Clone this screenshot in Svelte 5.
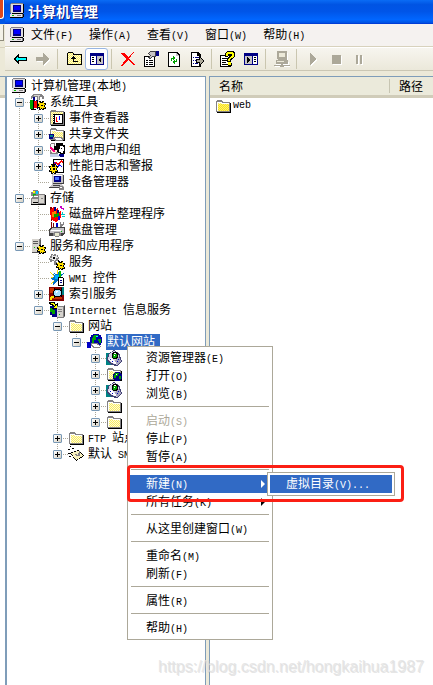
<script lang="ts">
	type Shape = [d: string, fill: string];

	interface TreeNode {
		label: string;
		icon: string;
		depth: number;
		box?: '+' | '-';
		selected?: boolean;
	}

	interface MenuEntry {
		label?: string;
		disabled?: boolean;
		active?: boolean;
		sub?: boolean;
	}

	const folder: Shape[] = [
		['M1 3h1v-1h5v1h1v1h7v10H1z', '#848284'],
		['M2 4h5v1h7v8H2z', 'url(#dither)'],
		['M2 4h1v9H2zM2 4h5v1H2zM7 5h7v1H7z', '#fff'],
		['M15 5h1v10H2v-1h13z', '#000']
	];
	const computer: Shape[] = [
		['M2 0h12v11H2z', '#dedbde'],
		['M2 0h12v1H2zM1 1h1v9H1z', '#848284'],
		['M14 1h1v9h-1zM3 10h11v1H3z', '#000'],
		['M4 2h8v7H4z', '#000084'],
		['M5 3h6v4H5z', '#0000ff'],
		['M1 11h13l1-1v3l-2 2H1z', '#848284'],
		['M1 11h12v3H1z', '#e7e3e7'],
		['M3 12h2v1H3z', '#00c300'],
		['M8 12h4v1H8z', '#848284'],
		['M1 14h13v1H1zM14 11h1v3h-1z', '#000']
	];
	const gear: Shape[] = [
		['M9 7h2v1h1V7h2v2h2v2h-1v2h1v2h-2v1h-2v-1h-1v1H9v-2H7v-2h1v-1H7V9h2z', '#000'],
		['M9 8h1v1h3V8h1v2h1v1h-1v2h1v1h-2v1h-1v-1h-1v1h-1v-2H8v-1h1v-2H8V9h1z', '#ffdf00'],
		['M11 11h2v1h-2z', '#000']
	];
	const globe: Shape[] = [
		['M9 6h5v1h1v1h1v5h-1v1h-1v1H9v-1H8v-1H7V8h1V7h1z', '#000084'],
		['M9 7h4v1h-1v2h-2v2H8V9h1zM13 10h2v3h-2z', '#00a200'],
		['M10 8h1v1h-1z', '#fff']
	];
	const server: Shape[] = [
		['M2 1h7l2 -1v14l-2 1H2z', '#848284'],
		['M2 1h7v14H2z', '#d6d3ce'],
		['M3 3h5v1H3zM3 5h5v1H3zM2 14h8v1H2zM10 2h1v12h-1z', '#5a595a'],
		['M4 9h1v1H4z', '#00c300']
	];
	const disk: Shape[] = [
		['M1 8l3-3h11v8l-2 2H1z', '#848284'],
		['M2 9h10v5H2z', '#d6d3ce'],
		['M4 6h9v1H4z', '#fff'],
		['M3 12h5v1H3zM1 14h13v1H1zM14 6h1v8h-1z', '#000'],
		['M9 10h2v1H9z', '#00c300']
	];
	const app: Shape[] = [
		['M0 3h4v9H0zM0 11h6v4H0z', '#008284'],
		['M2 4l6-4 5 3 3 8-5 5-6-1-4-4z', '#424173'],
		['M3 4l5-3 4 3 3 7-4 4-5-2-4-3z', '#d6d3e7'],
		['M2 9l3-1 5 4v2l-4-1z', '#fff'],
		['M9 10l4-3 2 4-4 4-1-2z', '#a5a2bd'],
		['M7 2h4v1h1v5h-1v1H7V8H6V3h1z', '#000'],
		['M7 4h4v3h-1v1H7z', '#00a200'],
		['M8 3h2v1H8zM8 5h1v1H8z', '#fff'],
		['M11 11h1v1h-1zM12 9h1v1h-1zM4 9h1v1H4zM6 11h1v1H6z', '#0000c6']
	];

	const icons: Record<string, Shape[]> = {
		folder,
		computer,
		filefolder: [
			...folder,
			['M3 6h11v7H3z', 'url(#gold)']
		],
		systools: [
			['M1 2l3-2h7l3 2v3h-2V3h-2v3H7V3H4L1 5z', '#848284'],
			['M4 1h6v1H4zM8 2h1v6H8z', '#d6d3ce'],
			['M3 3h2v4H3zM6 6h1v4H6z', '#000084'],
			['M0 6h3v9H0z', '#00a200'],
			['M4 7h3v7H4z', '#ff0000'],
			['M3 6h1v10H3zM7 6h1v9H7zM1 15h5v1H1z', '#000'],
			...gear
		],
		events: [
			['M1 1h1v-1h5v1h8v14H1z', '#848284'],
			['M2 2h12v12H2z', 'url(#dither)'],
			['M15 2h1v14H2v-1h13z', '#000'],
			['M4 4h10v10H4z', '#000'],
			['M6 5h7v8H6z', '#fff'],
			['M4 5h1v1H4zM4 7h1v1H4zM4 9h1v1H4zM4 11h1v1H4z', '#fff'],
			['M7 7h1v5H7z', '#ff0000'],
			['M10 6h1v4h-1z', '#0000ff'],
			['M8 11h1v1H8z', '#ff0000']
		],
		shared: [
			...folder,
			['M0 8h5v5H0z', '#000084'],
			['M1 9h3v2H1z', '#008284'],
			['M4 11h8l3 2-2 2H7l-3-2z', '#848284'],
			['M5 12h6l2 1-1 1H8z', '#fff']
		],
		users: [
			['M1 8h8v7H1z', '#848284'],
			['M1 2h1v5H1zM5 1h1v3H5zM2 1h3v1H2z', '#848284'],
			['M2 8l3-2 3 3-1 2H3z', '#ffe7d6'],
			['M0 6l2-1 4 4-1 2z', '#ff0084'],
			['M1 12h8l2 3H1z', '#c6cfe7'],
			['M7 1h7v2h2v9h-4l-4-2V8H5V4h2z', '#000'],
			['M11 4h3v1h1v4h-1v2h-2v-1h-2V7h1z', '#fff'],
			['M12 6h1v1h-1z', '#000'],
			['M10 12h5v3h-4z', '#000084']
		],
		perf: [
			['M4 1h11v14H4z', '#000'],
			['M5 2h9v12H5z', '#fff'],
			['M5 5l2-2 2 3 3-4 2 2v1l-2-1-3 4-2-3-2 2z', '#ff0000'],
			['M5 4h1l2 4 2-2 3 2v1l-3-1-2 2z', '#0000ff'],
			['M2 6h2v1h1V6h2v2h2v2H8v2h1v2H7v2H5v-1H4v1H2v-2H0v-2h1v-2H0V8h2z', '#000'],
			['M2 7h1v2h3V7h1v2h1v1H7v2h1v1H6v2H5v-1H4v1H3v-2H1v-1h1v-2H1V9h1z', '#ffdf00'],
			['M4 10h2v2H4z', '#000']
		],
		devices: [
			['M3 0h11v10H3z', '#c6c3c6'],
			['M4 1h9v1H4z', '#fff'],
			['M5 2h7v6H5z', '#000084'],
			['M6 3h4v3H6z', '#4a71ff'],
			['M14 1h1v9h-1zM4 9h10v1H4z', '#424142'],
			['M2 11l2-1h9l2 3H1z', '#c6c3c6'],
			['M4 11h7v1H4zM0 13h12v1H0z', '#424142'],
			['M10 12h4v1h1v3h-5z', '#848284'],
			['M11 13h2v1h-2z', '#fff']
		],
		storage: [
			['M3 0h5v1h1v6H3V6H1V2h2z', '#848284'],
			['M3 1h2v2H3z', '#ffff00'],
			['M6 1h2v3H6z', '#00c7ff'],
			['M3 4h3v2H3z', '#00c300'],
			...disk,
			['M8 4h7v10H8z', '#848284'],
			['M9 5h5v8H9z', '#d6d3ce'],
			['M11 8h2v1h-2z', '#848284'],
			['M15 5h1v10H8v-1h7z', '#000']
		],
		defrag: [
			['M1 1h2v3H1zM2 8h1v7H2z', '#840000'],
			['M1 4l4-3v4l4-3v5l3-2v7l-5 4-5-3z', '#ff0000'],
			['M5 1h2v4H5zM8 4h2v6H8z', '#000084'],
			['M3 6l4-1v5l-4 1z', '#ff8200'],
			['M5 8l5-1v3l-5 2z', '#00a200'],
			['M9 10h2v4H9z', '#0000ff'],
			['M11 0h2v2h2v2h-1V3h-2z', '#c600c6'],
			['M12 8h4v1h-4zM13 6h1v2h-1zM13 10h3v1h-3z', '#00c7c6']
		],
		diskmgmt: [
			['M2 0h1v6H2zM4 1h1v4H4z', '#840000'],
			['M7 1h2v5H7z', '#0000c6'],
			['M11 0h1v2h2V0h1v3l-2 1v3h-2V3z', '#848284'],
			['M0 7l4-2h12v6l-3 3H0z', '#424142'],
			['M1 8l3-2h11v5H1z', '#c6c3c6'],
			['M2 8h10v1H2z', '#fff'],
			['M5 10h6v1h1v3h-2v1H6v-1H4v-3h1z', '#848284'],
			['M6 11h4v3H6z', '#e7e7ce'],
			['M12 9h1v1h-1z', '#00c300']
		],
		services: [...server, ...gear],
		gears: [
			['M2 0h2v1h1V0h2v1h2v2h1v2H9v2H7v1H5V7H3v1H1V6H0V4h1V2h1z', '#848284'],
			['M3 1h1v1h3V1h1v2h1v1H7v2H6v1H5V6H3V5H1V4h2z', '#e7e7e7'],
			['M4 3h2v2H4zM9 6h1v1H9z', '#000'],
			['M5 8h3v3H5z', '#848284'],
			...gear
		],
		wmi: [
			['M5 2l2 3 3-4v4l5-2-3 4 3 2-4 1v4l-3-3-4 4 1-5-4-1 4-2-3-4 4 2z', '#0071c6'],
			['M1 2l4 3-1 1zM0 8l4-1v1zM2 14l3-4v2zM8 0h1v4H8z', '#ffdf00'],
			['M6 5h4v4H6z', '#00aeff'],
			['M10 1h2v6h-2z', '#00c300'],
			['M9 7h5v1h1v8H9z', '#000'],
			['M10 8h4v7h-4z', '#fff'],
			['M11 10h2v1h-2zM11 12h2v1h-2z', '#000084']
		],
		index: [
			['M0 1h15v14H0z', '#840000'],
			['M1 2h4v5H1zM2 11h11v2H2z', '#c63000'],
			['M5 2h1v10H5zM12 2h1v9h-1z', '#000'],
			['M13 1h2v8h-2z', '#008284'],
			['M6 3h5v1h1v1h1v4h-1v1h-1v1H6v-1H5V9H4V5h1V4h1z', '#000'],
			['M6 4h5v1h1v4h-1v1H6V9H5V5h1z', '#a5dfff'],
			['M7 5h2v1H7zM7 6h1v1H7z', '#fff'],
			['M2 10h3v2H3v2H1v-3h1z', '#ffdf00']
		],
		iis: [
			['M1 4h5v2h2v9H3v-2H1z', '#000084'],
			['M1 6h3v2h2v4H3v-2H1z', '#00a200'],
			['M0 0h6v2h2V1h1v6H3V6h2V4H3V3H1z', '#000'],
			['M2 1h3v1h1v2h1V3h1v3H5V5h1L4 2H2z', '#ffff00'],
			['M8 4h6l2-1v11l-2 2H8z', '#848284'],
			['M8 5h6v10H8z', '#d6d3ce'],
			['M9 7h4v1H9zM9 9h4v1H9zM8 15h7v1H8z', '#848284'],
			['M15 4h1v10h-1z', '#424142'],
			['M10 12h1v1h-1z', '#00c300']
		],
		site: [
			['M6 0h6v1h2v2h1v6h-1v2h-2v1H6v-1H4V9H3V3h1V1h2z', '#0000a5'],
			['M7 1h4v2H9v3H7v3H5V4h1V2h1zM11 5h3v4h-2V7h-1z', '#00a200'],
			['M9 2h2v1H9z', '#00ffff'],
			['M0 8h4v6H0z', '#0000c6'],
			['M4 9h6l4 3-2 2H7l-3-2z', '#848284'],
			['M4 10h5l4 2-1 1H8z', '#fff']
		],
		sitefolder: [...folder, ...globe],
		app,
		smtp: [
			['M2 0h1v1H2zM0 3h2v1H0zM4 2h2v1H4zM0 7h3v1H0zM1 10h2v1H1z', '#000'],
			['M2 7l8-3 6 6-8 5z', '#000'],
			['M3 7l7-2 5 5-7 4z', '#f7efbd'],
			['M5 7l5 2 1-4 1 1v4H9z', '#848284']
		],
		back: [
			['M1 8l6-6v4h8v4H7v4z', '#000'],
			['M3 8l3-3v2h8v2H6v2z', '#00ffff']
		],
		forward: [
			['M15 9l-6 6v-4H2V7h7V3z', '#fff'],
			['M14 8l-6 6v-4H1V6h7V2z', '#aca899']
		],
		up: [
			['M1 2h1V1h5v1h1v1h8v11H1z', '#000'],
			['M2 2h5v2h8v9H2z', 'url(#dither)'],
			['M7 5h1v1h1v1h1v1H8v2h4v1H7V8H5V7h1V6h1z', '#000']
		],
		panel: [
			['M1 2h14v12H1z', '#000084'],
			['M2 5h5v8H2z', '#fff'],
			['M3 6h2v1H3zM3 8h2v1H3zM3 10h2v1H3z', '#000'],
			['M8 5h6v8H8z', '#c6c3c6'],
			['M12 6v6l-3-3z', '#000']
		],
		remove: [['M1 2h3l4 4 5-5h1L9 8l6 6h-2L8 9l-5 6H1l5-7z', '#f00']],
		props: [
			['M1 5h11v11H1z', '#000'],
			['M2 6h9v9H2z', '#fff'],
			['M3 9h2v1H3zM6 9h4v1H6zM3 11h2v1H3zM6 11h4v1H6zM3 13h2v1H3zM6 13h4v1H6z', '#000'],
			['M4 3l4-3h5v6H9L7 8 5 7l2-3z', '#424142'],
			['M5 3l3-2h4v4H9L7 7 6 6l2-2z', '#c6c3c6'],
			['M13 0h3v5h-3z', '#000084']
		],
		refresh: [
			['M2 1h9l3 3v12H2z', '#000'],
			['M3 2h7v3h3v10H3z', '#fff'],
			['M10 2l3 3h-3z', '#c6c3c6'],
			['M7 5l3 2-3 2V8H6v2H5V7h2zM9 13l-3-2 3-2v1h1V8h1v3H9z', '#00a200']
		],
		exportlist: [
			['M2 1h7l3 3v12H2z', '#000'],
			['M3 2h5v3h3v10H3z', '#fff'],
			['M4 6h1v1H4zM6 6h4v1H6zM4 9h1v1H4zM6 9h3v1H6zM4 12h1v1H4zM6 12h3v1H6z', '#000084'],
			['M7 8h3V5l6 5-6 5v-3H7z', '#000'],
			['M8 9h3V7l3 3-3 3v-2H8z', '#aca899']
		],
		help: [
			['M0 4h11v12H0z', '#000'],
			['M1 5h9v10H1z', '#fff'],
			['M2 7h5v1H2zM2 9h5v1H2zM2 11h4v1H2zM2 13h6v1H2z', '#000'],
			['M5 2l2-2h6l2 2v4l-4 3v2H7V7l3-2V4H8v2H5z', '#000'],
			['M6 2l1-1h5l2 2v3l-4 2v2H8V8l4-3V3H8v2H6zM8 11h3v3H8z', '#ffff00'],
			['M11 12h1v3H8v-1h3z', '#000']
		],
		console: [
			['M1 2h14v12H1z', '#000084'],
			['M2 5h7v8H2z', '#c6c3c6'],
			['M10 5h4v8h-4z', '#fff'],
			['M4 6l3 3-3 3zM11 6h2v1h-2zM11 8h2v1h-2zM11 10h2v1h-2z', '#000']
		],
		remote: [
			['M5 2h9v9H5zM2 11h13v4H2zM1 15h15v1H1z', '#fff'],
			['M3 0h10v8H3zM4 8h9v1H4zM2 9h12v4H2zM7 13h2v1H7zM0 14h16v1H0zM6 15h4v1H6z', '#aca899'],
			['M5 2h6v4H5zM3 10h7v1H3z', '#ece9d8']
		],
		play: [
			['M6 3l6 6-6 6z', '#fff'],
			['M5 2l6 6-6 6z', '#aca899']
		],
		stop: [
			['M5 5h9v9H5z', '#fff'],
			['M4 4h9v9H4z', '#aca899']
		],
		pause: [
			['M6 5h2v9H6zM10 5h2v9h-2z', '#fff'],
			['M5 4h2v9H5zM9 4h2v9H9z', '#aca899']
		]
	};

	const menuBar = ['文件(F)', '操作(A)', '查看(V)', '窗口(W)', '帮助(H)'];

	const toolbar = [
		['back', '后退'],
		['forward', '前进'],
		null,
		['up', '向上'],
		['panel', '显示树'],
		null,
		['remove', '删除'],
		['props', '属性'],
		['refresh', '刷新'],
		['exportlist', '导出列表'],
		null,
		['help', '帮助'],
		['console', '操作窗格'],
		null,
		['remote', '连接'],
		null,
		['play', '启动'],
		['stop', '停止'],
		['pause', '暂停']
	];

	const nodes: TreeNode[] = [
		{ label: '计算机管理(本地)', icon: 'computer', depth: 0 },
		{ label: '系统工具', icon: 'systools', depth: 1, box: '-' },
		{ label: '事件查看器', icon: 'events', depth: 2, box: '+' },
		{ label: '共享文件夹', icon: 'shared', depth: 2, box: '+' },
		{ label: '本地用户和组', icon: 'users', depth: 2, box: '+' },
		{ label: '性能日志和警报', icon: 'perf', depth: 2, box: '+' },
		{ label: '设备管理器', icon: 'devices', depth: 2 },
		{ label: '存储', icon: 'storage', depth: 1, box: '-' },
		{ label: '磁盘碎片整理程序', icon: 'defrag', depth: 2 },
		{ label: '磁盘管理', icon: 'diskmgmt', depth: 2 },
		{ label: '服务和应用程序', icon: 'services', depth: 1, box: '-' },
		{ label: '服务', icon: 'gears', depth: 2 },
		{ label: 'WMI 控件', icon: 'wmi', depth: 2 },
		{ label: '索引服务', icon: 'index', depth: 2, box: '+' },
		{ label: 'Internet 信息服务', icon: 'iis', depth: 2, box: '-' },
		{ label: '网站', icon: 'folder', depth: 3, box: '-' },
		{ label: '默认网站', icon: 'site', depth: 4, box: '-', selected: true },
		{ label: '', icon: 'app', depth: 5, box: '+' },
		{ label: '', icon: 'sitefolder', depth: 5, box: '+' },
		{ label: '', icon: 'app', depth: 5, box: '+' },
		{ label: '', icon: 'folder', depth: 5, box: '+' },
		{ label: '', icon: 'folder', depth: 5, box: '+' },
		{ label: 'FTP 站点', icon: 'folder', depth: 3, box: '+' },
		{ label: '默认 SMTP', icon: 'smtp', depth: 3, box: '+' }
	];

	const contextMenu: MenuEntry[] = [
		{ label: '资源管理器(E)' },
		{ label: '打开(O)' },
		{ label: '浏览(B)' },
		{},
		{ label: '启动(S)', disabled: true },
		{ label: '停止(P)' },
		{ label: '暂停(A)' },
		{},
		{ label: '新建(N)', active: true, sub: true },
		{ label: '所有任务(K)', sub: true },
		{},
		{ label: '从这里创建窗口(W)' },
		{},
		{ label: '重命名(M)' },
		{ label: '刷新(F)' },
		{},
		{ label: '属性(R)' },
		{},
		{ label: '帮助(H)' }
	];

	// is there a later sibling at this depth before the branch closes
	function continues(index: number, depth: number): boolean {
		for (let i = index + 1; i < nodes.length; i++) {
			if (nodes[i].depth === depth) return true;
			if (nodes[i].depth < depth) return false;
		}
		return false;
	}

	function guides(index: number): string[] {
		const own = nodes[index].depth;
		return Array.from({ length: own }, (_, i) => {
			const more = continues(index, i + 1);
			if (i + 1 === own) return more ? 'tee' : 'elbow';
			return more ? 'line' : 'blank';
		});
	}

	// split into half-width and full-width runs
	function runs(text: string): string[] {
		return text.match(/[\x20-\x7e]+|[^\x20-\x7e]+/g) ?? [];
	}
</script>

{#snippet icon(name: string)}
	<svg class="icon" viewBox="0 0 16 16" aria-hidden="true">
		{#each icons[name] as [d, fill]}
			<path {d} {fill} />
		{/each}
	</svg>
{/snippet}

{#snippet mixed(text: string)}
	{#each runs(text) as run}<span class:latin={/^[\x20-\x7e]/.test(run)}>{run}</span>{/each}
{/snippet}

<svg class="defs" aria-hidden="true">
	<defs>
		<pattern id="dither" width="2" height="2" patternUnits="userSpaceOnUse">
			<rect width="2" height="2" fill="#fffbd6" />
			<rect width="1" height="1" fill="#f7eb63" />
			<rect x="1" y="1" width="1" height="1" fill="#f7eb63" />
		</pattern>
		<pattern id="gold" width="2" height="2" patternUnits="userSpaceOnUse">
			<rect width="2" height="2" fill="#fff36b" />
			<rect width="1" height="1" fill="#f7df21" />
			<rect x="1" y="1" width="1" height="1" fill="#f7df21" />
		</pattern>
	</defs>
</svg>

<div class="desktop">
	<div class="behind" aria-hidden="true">
		<div class="behind-title"><div class="behind-close"></div></div>
		<div class="behind-menu"><div class="behind-button"></div></div>
		<div class="behind-tools"></div>
		<div class="behind-header"></div>
		<div class="behind-body"></div>
	</div>

	<div class="window">
		<header class="title-bar">
			{@render icon('computer')}
			<h1>计算机管理</h1>
		</header>

		<nav class="menu-bar">
			{@render icon('computer')}
			{#each menuBar as item}
				<button class="menu-bar-item">{@render mixed(item)}</button>
			{/each}
		</nav>

		<div class="toolbar" role="toolbar" aria-label="工具栏">
			{#each toolbar as tool}
				{#if tool}
					<button class="tool" class:pressed={tool[0] === 'panel'} aria-label={tool[1]}>
						{@render icon(tool[0])}
					</button>
				{:else}
					<span class="tool-separator"></span>
				{/if}
			{/each}
		</div>

		<div class="panes">
			<div class="tree" role="tree" aria-label="控制台树">
				{#each nodes as node, i}
					<div class="node" role="treeitem" aria-selected={!!node.selected} tabindex="-1">
						{#each guides(i) as guide, level}
							<span class="guide {guide}">
								{#if node.box && level === node.depth - 1}
									<span class="box" class:plus={node.box === '+'}></span>
								{/if}
							</span>
						{/each}
						{@render icon(node.icon)}
						<span class="node-label" class:selected={node.selected}>{@render mixed(node.label)}</span>
					</div>
				{/each}
			</div>

			<div class="list">
				<table>
					<thead>
						<tr><th class="name-column">名称</th><th>路径</th></tr>
					</thead>
					<tbody>
						<tr>
							<td><span class="file">{@render icon('filefolder')}<span class="latin">web</span></span></td>
							<td></td>
						</tr>
					</tbody>
				</table>
			</div>
		</div>
	</div>

	<div class="menu context" role="menu">
		{#each contextMenu as entry}
			{#if entry.label}
				<button class="menu-item" class:active={entry.active} role="menuitem" disabled={entry.disabled}>
					<span>{@render mixed(entry.label)}</span>
					{#if entry.sub}<span class="arrow"></span>{/if}
				</button>
			{:else}
				<hr />
			{/if}
		{/each}
	</div>

	<div class="menu submenu" role="menu">
		<button class="menu-item active" role="menuitem"><span>{@render mixed('虚拟目录(V)...')}</span></button>
	</div>

	<div class="highlight"></div>
	<div class="watermark">https://blog.csdn.net/hongkaihua1987</div>
</div>

<style>
	:global(body) {
		background: #fff;
	}

	.desktop {
		position: relative;
		display: grid;
		grid-template-columns: 5px 1fr;
		min-height: 100vh;
		overflow: hidden;
		font-family: 'Liberation Sans', 'Noto Sans CJK SC', sans-serif;
		font-size: 12px;
		line-height: 16px;
		color: #000;
	}

	.defs {
		position: absolute;
		width: 0;
		height: 0;
	}

	button {
		margin: 0;
		padding: 0;
		border: 0;
		background: none;
		font: inherit;
		color: inherit;
		white-space: nowrap;
	}

	.icon {
		display: block;
		flex: none;
		width: 16px;
		height: 16px;
		shape-rendering: crispEdges;
	}

	.latin {
		font-family: 'Liberation Mono', monospace;
		font-size: 10px;
		white-space: pre;
	}

	/* sliver of the window behind */
	.behind {
		display: flex;
		flex-direction: column;
		background: #ece9d8;
	}

	.behind-title {
		height: 24px;
		background: #0055e5;
	}

	.behind-close {
		width: 3px;
		height: 18px;
		border: 1px solid #fff;
		border-width: 0 1px 1px 0;
		border-radius: 0 0 3px 0;
		background: #e04a1e;
	}

	.behind-menu {
		height: 22px;
		padding-top: 1px;
		border-bottom: 1px solid #d8d2bd;
	}

	.behind-button {
		width: 3px;
		height: 15px;
		border: 1px solid #8f8b7c;
		border-width: 0 1px 1px 0;
		background: #f4f2e8;
	}

	.behind-tools {
		height: 28px;
	}

	.behind-header {
		height: 18px;
		border-top: 1px solid #7f9db9;
		border-bottom: 3px solid #d0ccb9;
	}

	.behind-body {
		flex: 1;
		background: #fff;
	}

	.window {
		display: flex;
		flex-direction: column;
		min-width: 0;
		background: #ece9d8;
	}

	.title-bar {
		display: flex;
		align-items: center;
		gap: 3px;
		height: 24px;
		padding: 0 4px;
		box-sizing: border-box;
		border-bottom: 1px solid #003dd7;
		background: linear-gradient(#0a6cf5 0%, #0054e3 20%, #0055e8 50%, #0066ff 85%, #0050e0 100%);
	}

	.title-bar .icon {
		margin-bottom: 2px;
	}

	h1 {
		margin: 0;
		font-size: 14px;
		font-weight: 700;
		line-height: 20px;
		color: #fff;
		text-shadow: 1px 1px #0a1883;
	}

	.menu-bar {
		display: flex;
		align-items: center;
		height: 22px;
		padding: 0 4px;
		gap: 16px;
		border-bottom: 1px solid #d8d2bd;
		background: #f5f2f0;
	}

	.menu-bar .icon {
		margin-right: -10px;
	}

	.menu-bar-item {
		padding-top: 2px;
	}

	.toolbar {
		display: flex;
		align-items: center;
		height: 22px;
		padding: 0 3px;
		border-top: 1px solid #fff;
		border-bottom: 1px solid #cbc7b4;
		background: linear-gradient(#f7f5ef, #ebe8da);
	}

	.tool {
		display: flex;
		align-items: center;
		justify-content: center;
		flex: none;
		width: 23px;
		height: 22px;
		box-sizing: border-box;
	}

	.tool.pressed {
		border: 1px solid #98b5e2;
		border-radius: 3px;
		background: #fff;
	}

	.tool-separator {
		flex: none;
		width: 1px;
		height: 20px;
		margin: 0 4px 0 3px;
		background: #cac6b0;
	}

	.panes {
		flex: 1;
		display: grid;
		grid-template-columns: 201px 1fr;
		gap: 3px;
		margin-top: 5px;
	}

	.tree {
		padding: 1px 0 0 4px;
		border: 1px solid #7f9db9;
		border-left-width: 2px;
		border-bottom: 0;
		background: #fff;
		overflow: hidden;
	}

	.node {
		display: flex;
		height: 16px;
		white-space: nowrap;
	}

	.guide {
		position: relative;
		display: flex;
		flex: none;
		align-items: center;
		width: 19px;
	}

	.guide::before,
	.guide::after {
		content: '';
		position: absolute;
	}

	.line::before,
	.tee::before,
	.elbow::before {
		top: 0;
		left: 8px;
		width: 1px;
		height: 16px;
		background: repeating-linear-gradient(#aca899 0 1px, transparent 1px 2px);
	}

	.elbow::before {
		height: 8px;
	}

	.tee::after,
	.elbow::after {
		top: 8px;
		left: 8px;
		width: 11px;
		height: 1px;
		background: repeating-linear-gradient(90deg, #aca899 0 1px, transparent 1px 2px);
	}

	.box {
		position: relative;
		z-index: 1;
		width: 7px;
		height: 7px;
		margin: 1px 0 0 4px;
		border: 1px solid #7898b5;
		border-radius: 1px;
		background:
			linear-gradient(#000, #000) center / 5px 1px no-repeat,
			linear-gradient(135deg, #fff, #d5d0c3);
	}

	.box.plus {
		background:
			linear-gradient(#000, #000) center / 5px 1px no-repeat,
			linear-gradient(#000, #000) center / 1px 5px no-repeat,
			linear-gradient(135deg, #fff, #d5d0c3);
	}

	.node-label {
		margin-left: 3px;
		padding: 0 5px 0 1px;
	}

	.node-label.selected {
		background: #316ac5;
		color: #fff;
	}

	.list {
		border: 1px solid #7f9db9;
		border-width: 1px 0 0 1px;
		background: #fff;
		overflow: hidden;
	}

	table {
		width: 100%;
		border-spacing: 0;
		table-layout: fixed;
	}

	th {
		height: 16px;
		padding: 2px 9px 0;
		border-bottom: 3px solid #d0ccb9;
		background: #ebeadb;
		font-weight: 400;
		text-align: left;
	}

	.name-column {
		width: 162px;
		background: linear-gradient(#c7c5b2, #c7c5b2) right center / 1px 14px no-repeat #ebeadb;
	}

	td {
		padding: 0 5px;
	}

	.file {
		display: flex;
		align-items: center;
		gap: 2px;
	}

	.menu {
		position: absolute;
		z-index: 2;
		padding: 2px;
		border: 1px solid #aca899;
		box-sizing: border-box;
		background: #fff;
	}

	.context {
		top: 346px;
		left: 127px;
		width: 146px;
	}

	.submenu {
		top: 472px;
		left: 267px;
		width: 128px;
	}

	.menu-item {
		display: flex;
		align-items: center;
		justify-content: space-between;
		width: 100%;
		height: 18px;
		padding: 2px 5px 0 16px;
		text-align: left;
	}

	.menu-item.active {
		background: #316ac5;
		color: #fff;
	}

	.menu-item:disabled {
		color: #aca899;
	}

	.arrow {
		margin-bottom: 2px;
		border: 4px solid transparent;
		border-right-width: 0;
		border-left-color: currentColor;
	}

	hr {
		height: 1px;
		margin: 3px 1px 5px;
		border: 0;
		background: #aca899;
	}

	.highlight {
		position: absolute;
		z-index: 3;
		top: 465px;
		left: 127px;
		width: 271px;
		height: 31px;
		border: 3px solid #fb1f14;
		border-radius: 4px;
	}

	.watermark {
		position: absolute;
		right: 9px;
		bottom: 8px;
		font-size: 16px;
		line-height: 20px;
		color: rgba(225, 225, 225, 0.8);
		text-shadow: 1px 1px rgba(190, 190, 190, 0.4);
	}
</style>
